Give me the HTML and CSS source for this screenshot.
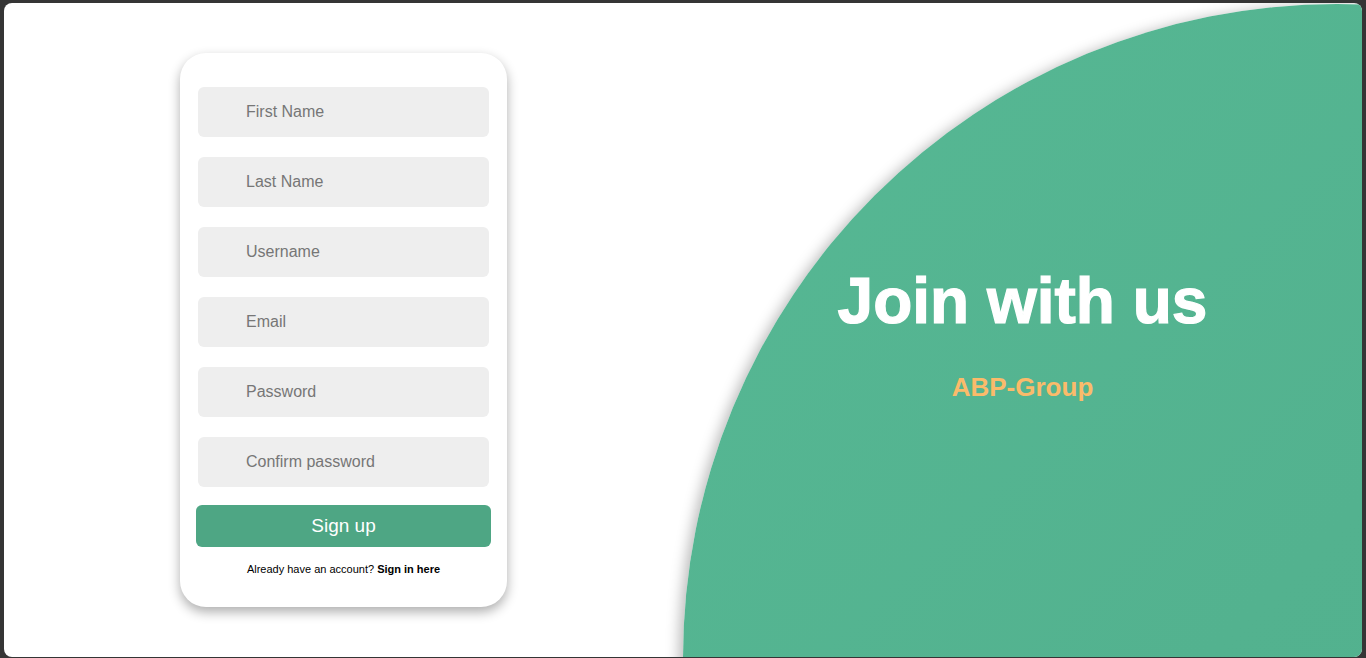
FILE: index.html
```html
<!DOCTYPE html>
<html lang="en">
<head>
<meta charset="utf-8">
<title>Sign up</title>
<link rel="stylesheet" href="styles.css">
</head>
<body>
<div class="frame">
  <div class="blob"></div>
  <section class="left">
    <form class="card">
      <div class="fields">
        <input class="field" type="text" placeholder="First Name">
        <input class="field" type="text" placeholder="Last Name">
        <input class="field" type="text" placeholder="Username">
        <input class="field" type="email" placeholder="Email">
        <input class="field" type="password" placeholder="Password">
        <input class="field" type="password" placeholder="Confirm password">
      </div>
      <button class="submit" type="button">Sign up</button>
      <p class="note">Already have an account? <a href="#" class="link">Sign in here</a></p>
    </form>
  </section>
  <section class="right">
    <h1 class="title">Join with us</h1>
    <p class="brand">ABP-Group</p>
  </section>
</div>
</body>
</html>
```

FILE: styles.css
```css
html, body {
  margin: 0;
  padding: 0;
  height: 100%;
}
body {
  background: #353535;
  font-family: "Liberation Sans", Arial, sans-serif;
  overflow: hidden;
}
.frame {
  position: relative;
  margin: 3px 4px 0 4px;
  height: 654px;
  background: #ffffff;
  border-radius: 8px;
  overflow: hidden;
  display: flex;
}
.blob {
  position: absolute;
  left: 679px;
  top: 1px;
  width: 1308px;
  height: 1308px;
  border-radius: 50%;
  background: linear-gradient(135deg, #56b894 0%, #53b28f 45%, #50ae8b 100%);
  box-shadow: -4px 2px 14px rgba(0, 0, 0, 0.28);
}
.left {
  width: 679px;
  flex: none;
  display: flex;
  align-items: center;
  justify-content: center;
}
.card {
  width: 327px;
  box-sizing: border-box;
  padding: 34px 16px 31px;
  background: #ffffff;
  border-radius: 26px;
  box-shadow: 0 5px 12px rgba(0, 0, 0, 0.32);
  display: flex;
  flex-direction: column;
}
.fields {
  display: flex;
  flex-direction: column;
  gap: 20px;
  padding: 0 2px;
}
.field {
  height: 50px;
  box-sizing: border-box;
  border: none;
  outline: none;
  background: #eeeeee;
  border-radius: 6px;
  padding: 0 0 0 48px;
  font-family: "Liberation Sans", Arial, sans-serif;
  font-size: 16px;
  color: #333;
}
.field::placeholder {
  color: #767676;
}
.submit {
  margin-top: 18px;
  height: 42px;
  border: none;
  border-radius: 6px;
  background: #4ea684;
  color: #ffffff;
  font-family: "Liberation Sans", Arial, sans-serif;
  font-size: 19px;
  padding-bottom: 2px;
  cursor: pointer;
}
.note {
  margin: 16px 0 0;
  font-size: 11px;
  line-height: 13px;
  text-align: center;
  color: #000;
}
.link {
  color: #000;
  font-weight: bold;
  text-decoration: none;
}
.right {
  position: relative;
  z-index: 1;
  flex: 1;
  display: flex;
  flex-direction: column;
  align-items: center;
  justify-content: center;
  padding-top: 6px;
}
.title {
  margin: 0;
  font-size: 64px;
  line-height: 74px;
  font-weight: bold;
  color: #ffffff;
  -webkit-text-stroke: 1.2px #ffffff;
}
.brand {
  margin: 34px 0 0;
  font-size: 26px;
  line-height: 30px;
  font-weight: bold;
  color: #fbbb6a;
}
```
